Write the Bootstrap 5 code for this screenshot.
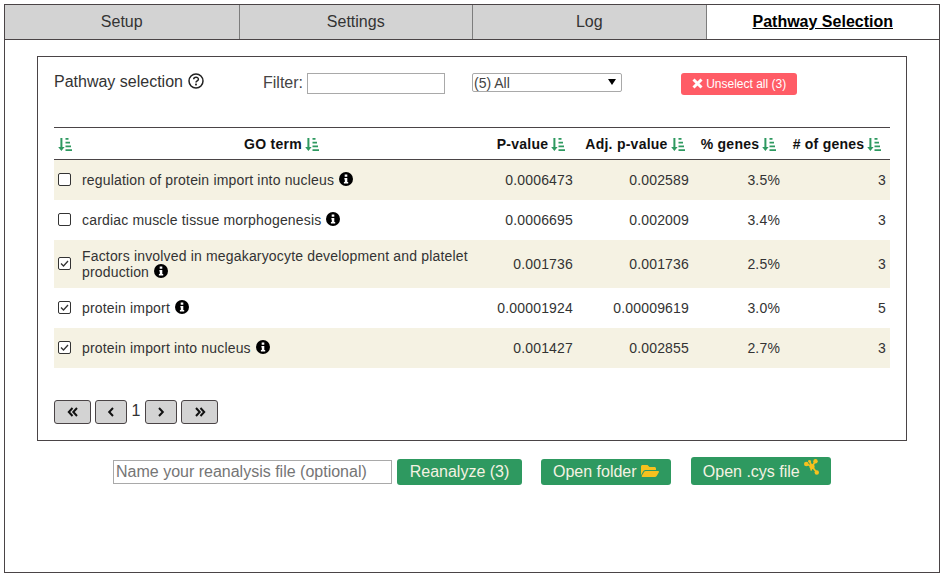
<!DOCTYPE html>
<html lang="en">
<head>
  <meta charset="UTF-8" />
  <meta name="viewport" content="width=device-width, initial-scale=1" />
  <title>Pathway Selection</title>
  <link href="https://cdn.jsdelivr.net/npm/bootstrap@5.3.2/dist/css/bootstrap.min.css" rel="stylesheet" />
  <style>
    body {
      font-family: "Liberation Sans", Arial, sans-serif;
      color: #333;
      background: #fff;
      font-size: 14px;
    }
    .app-frame {
      margin: 4px 6px 0 4px;
      height: 569px;
      border: 1px solid #4a4446;
    }
    .tab-bar { border-bottom: 1px solid #4a4446; height: 35px; }
    .tab-bar .nav-link {
      height: 34px;
      padding: 7px 0 0;
      font-size: 16px;
      line-height: 20px;
      color: #333;
      background: #d3d3d3;
      border-left: 1px solid #7d7d7d;
      border-radius: 0;
    }
    .tab-bar .nav-item:first-child .nav-link { border-left: 0; }
    .tab-bar .nav-link.active-tab {
      background: #fff;
      color: #000;
      font-weight: 700;
      text-decoration: underline;
    }
    .select-box {
      margin: 16px 32px 0;
      height: 385px;
      padding: 16px 16px 0;
      border: 1px solid #4a4446;
    }
    .top-row { height: 54px; }
    .box-title { width: 209px; font-size: 16px; line-height: 18px; margin-top: 0; }
    .filter-label { font-size: 16px; line-height: 20px; margin-right: 4px; color: #444; }
    .filter-input {
      width: 138px; height: 21px;
      border: 1px solid #a9a9a9;
      padding: 0 3px;
      outline: 0;
    }
    .pick-select {
      width: 150px; height: 19px;
      margin-left: 27px;
      padding: 0 0 0 1px;
      font-size: 14px; line-height: 16px;
      color: #444;
      border: 1px solid #a9a9a9;
      border-radius: 2px;
      appearance: none;
      background: #fff url("data:image/svg+xml,%3Csvg xmlns='http://www.w3.org/2000/svg' width='8' height='6'%3E%3Cpath d='M0 0h8L4 6z'/%3E%3C/svg%3E") no-repeat right 5px top 5px;
    }
    .btn-unselect {
      margin-left: 59px;
      width: 116px; height: 22px;
      padding: 0;
      font-size: 12px;
      line-height: 20px;
      color: #fff;
      background: #ff5c66;
      border: 0;
      border-radius: 3px;
    }
    .x-ico { width: 11px; height: 11px; vertical-align: -1px; }
    .gene-table {
      table-layout: fixed;
      width: 836px;
      margin: 0;
    }
    .gene-table > :not(caption) > * > * {
      padding: 0 4px;
      border: 0;
      vertical-align: middle;
      font-size: 14px;
      line-height: 16px;
      color: #333;
      box-shadow: none;
    }
    .gene-table thead th {
      height: 32px;
      padding: 0;
      font-weight: 700;
      color: #111;
      letter-spacing: .25px;
      text-align: center;
      border-top: 1px solid #4a4446;
      border-bottom: 1px solid #4a4446;
    }
    .gene-table tbody tr { height: 40px; }
    .gene-table tbody tr.tall-row { height: 48px; }
    .gene-table tbody td { letter-spacing: .17px; }
    .gene-table tbody tr:nth-child(odd) > td { background-color: #f5f2e3; }
    .num-cell { text-align: right; }
    .c-check { width: 24px; }
    .c-term { width: 411px; }
    .c-p { width: 88px; }
    .c-adj { width: 116px; }
    .c-pct { width: 91px; }
    .c-count { width: 106px; }
    .pick-check.form-check-input {
      display: block;
      width: 13px; height: 13px;
      margin: 0;
      border: 1px solid #333;
      border-radius: 2px;
      background-color: #fff;
      box-shadow: none;
    }
    .pick-check.form-check-input:checked {
      background-color: #fff;
      border-color: #333;
      background-size: 11px 11px;
      background-image: url("data:image/svg+xml,%3Csvg xmlns='http://www.w3.org/2000/svg' viewBox='0 0 11 11'%3E%3Cpath d='M2 5.500l2.500 2.500L9 3' fill='none' stroke='%23333' stroke-width='1.300'/%3E%3C/svg%3E");
    }
    .sort-ico { width: 14px; height: 13px; color: #2e9960; vertical-align: -2px; margin-left: 3px; }
    .info-ico { width: 14px; height: 14px; vertical-align: -1px; margin-left: 1px; }
    .help-ico { width: 16px; height: 16px; vertical-align: -2px; margin-left: 1px; }
    .pager { margin-top: 32px; }
    .pager .btn {
      height: 24px;
      padding: 0;
      background: #d3d3d3;
      border: 1px solid #4a4446;
      border-radius: 3px;
      display: flex;
      align-items: center;
      justify-content: center;
    }
    .pg-wide { width: 37px; }
    .pg-narrow { width: 32px; }
    .pg-num { font-size: 16px; line-height: 22px; width: 10px; text-align: center; margin: 0 4px; }
    .chev { width: 12px; height: 10px; }
    .bottom-row { margin: 16px 0 0 108px; }
    .name-input {
      width: 279px; height: 24px;
      margin-top: 3px;
      border: 1px solid #a9a9a9;
      padding: 0 2px;
      font-size: 16px;
      outline: 0;
    }
    .name-input::placeholder { color: #757575; opacity: 1; }
    .btn-go {
      padding: 0;
      height: 26px;
      font-size: 16px;
      line-height: 24px;
      color: #f5f2e3;
      background: #2e9960;
      border: 0;
      border-radius: 3px;
    }
    .btn-reanalyze { width: 125px; margin: 2px 0 0 5px; }
    .btn-folder { width: 130px; margin: 2px 0 0 19px; }
    .btn-cys { width: 140px; height: 28px; margin: 0 0 0 20px; line-height: 28px; padding-top: 1px; }
    .folder-ico { width: 18px; height: 16px; vertical-align: -2px; color: #f7c11e; }
    .net-ico { width: 15px; height: 16px; vertical-align: 2px; }
  </style>
</head>
<body>
  <svg width="0" height="0" class="position-absolute">
    <symbol id="sort" viewBox="0 0 14 13">
      <path d="M2.400 0h2v9h2.200L3.400 13 .2 9h2.200zM7.500 0h3v1.800h-3zM7.500 3.700h4.500v1.800H7.500zM7.500 7.400h5.500v1.800H7.500zM7.500 11.200H14V13H7.500z" fill="currentColor"/>
    </symbol>
    <symbol id="info" viewBox="0 0 14 14">
      <circle cx="7" cy="7" r="7" fill="#000"/>
      <path d="M5.700 2.600h2.600v2.200H5.700zM5.400 6h2.900v4.100h.9v1.400H4.900v-1.400h.9V7.400h-.4z" fill="#fff"/>
    </symbol>
  </svg>

  <div class="app-frame">
    <ul class="nav nav-justified tab-bar">
      <li class="nav-item"><a class="nav-link" href="#">Setup</a></li>
      <li class="nav-item"><a class="nav-link" href="#">Settings</a></li>
      <li class="nav-item"><a class="nav-link" href="#">Log</a></li>
      <li class="nav-item"><a class="nav-link active-tab" href="#">Pathway Selection</a></li>
    </ul>

    <div class="select-box">
      <div class="d-flex align-items-start top-row">
        <div class="box-title">Pathway selection
          <svg class="help-ico" viewBox="0 0 16 16"><circle cx="8" cy="8" r="7" fill="none" stroke="#222" stroke-width="1.500"/><path d="M5.700 6.300C5.800 3.600 10.400 3.600 10.400 6.200 10.400 7.900 8 7.800 8 9.600" fill="none" stroke="#222" stroke-width="1.500"/><rect x="7.100" y="10.600" width="1.800" height="1.800" fill="#222"/></svg>
        </div>
        <label class="filter-label" for="filter">Filter:</label>
        <input id="filter" class="filter-input" type="text" />
        <select class="pick-select"><option>(5) All</option></select>
        <button class="btn btn-unselect" type="button">
          <svg class="x-ico" viewBox="0 0 11 11"><path d="M1.500 1.500l8 8M9.500 1.500l-8 8" stroke="currentColor" stroke-width="3"/></svg> Unselect all (3)
        </button>
      </div>

      <table class="table gene-table">
        <colgroup>
          <col class="c-check" /><col class="c-term" /><col class="c-p" /><col class="c-adj" /><col class="c-pct" /><col class="c-count" />
        </colgroup>
        <thead>
          <tr>
            <th class="text-start ps-1"><svg class="sort-ico ms-0"><use href="#sort"/></svg></th>
            <th class="pe-1">GO term<svg class="sort-ico"><use href="#sort"/></svg></th>
            <th class="pe-1">P-value<svg class="sort-ico"><use href="#sort"/></svg></th>
            <th>Adj. p-value<svg class="sort-ico"><use href="#sort"/></svg></th>
            <th>% genes<svg class="sort-ico"><use href="#sort"/></svg></th>
            <th># of genes<svg class="sort-ico"><use href="#sort"/></svg></th>
          </tr>
        </thead>
        <tbody>
          <tr>
            <td><input class="form-check-input pick-check" type="checkbox" /></td>
            <td>regulation of protein import into nucleus <svg class="info-ico"><use href="#info"/></svg></td>
            <td class="num-cell">0.0006473</td><td class="num-cell">0.002589</td><td class="num-cell">3.5%</td><td class="num-cell">3</td>
          </tr>
          <tr>
            <td><input class="form-check-input pick-check" type="checkbox" /></td>
            <td>cardiac muscle tissue morphogenesis <svg class="info-ico"><use href="#info"/></svg></td>
            <td class="num-cell">0.0006695</td><td class="num-cell">0.002009</td><td class="num-cell">3.4%</td><td class="num-cell">3</td>
          </tr>
          <tr class="tall-row">
            <td><input class="form-check-input pick-check" type="checkbox" checked /></td>
            <td>Factors involved in megakaryocyte development and platelet production <svg class="info-ico"><use href="#info"/></svg></td>
            <td class="num-cell">0.001736</td><td class="num-cell">0.001736</td><td class="num-cell">2.5%</td><td class="num-cell">3</td>
          </tr>
          <tr>
            <td><input class="form-check-input pick-check" type="checkbox" checked /></td>
            <td>protein import <svg class="info-ico"><use href="#info"/></svg></td>
            <td class="num-cell">0.00001924</td><td class="num-cell">0.00009619</td><td class="num-cell">3.0%</td><td class="num-cell">5</td>
          </tr>
          <tr>
            <td><input class="form-check-input pick-check" type="checkbox" checked /></td>
            <td>protein import into nucleus <svg class="info-ico"><use href="#info"/></svg></td>
            <td class="num-cell">0.001427</td><td class="num-cell">0.002855</td><td class="num-cell">2.7%</td><td class="num-cell">3</td>
          </tr>
        </tbody>
      </table>

      <div class="d-flex align-items-start pager">
        <button class="btn pg-wide" type="button"><svg class="chev" viewBox="0 0 12 10"><path d="M5.500 1L1.800 5l3.700 4M10 1L6.300 5l3.700 4" fill="none" stroke="#111" stroke-width="2"/></svg></button>
        <button class="btn pg-narrow ms-1" type="button"><svg class="chev" viewBox="0 0 12 10"><path d="M8 1L4.200 5 8 9" fill="none" stroke="#111" stroke-width="2"/></svg></button>
        <span class="pg-num">1</span>
        <button class="btn pg-narrow" type="button"><svg class="chev" viewBox="0 0 12 10"><path d="M4 1l3.800 4L4 9" fill="none" stroke="#111" stroke-width="2"/></svg></button>
        <button class="btn pg-wide ms-1" type="button"><svg class="chev" viewBox="0 0 12 10"><path d="M2 1l3.700 4L2 9M6.500 1l3.700 4-3.700 4" fill="none" stroke="#111" stroke-width="2"/></svg></button>
      </div>
    </div>

    <div class="d-flex align-items-start bottom-row">
      <input class="name-input" type="text" placeholder="Name your reanalysis file (optional)" />
      <button class="btn btn-go btn-reanalyze" type="button">Reanalyze (3)</button>
      <button class="btn btn-go btn-folder" type="button">Open folder
        <svg class="folder-ico" viewBox="0 0 576 512"><path fill="currentColor" d="M572.694 292.093L500.27 416.248A63.997 63.997 0 0 1 444.989 448H45.025c-18.523 0-30.064-20.093-20.731-36.093l72.424-124.155A64 64 0 0 1 152 256h399.964c18.523 0 30.064 20.093 20.73 36.093zM152 224h328v-48c0-26.51-21.49-48-48-48H272l-64-64H48C21.49 64 0 85.49 0 112v278.046l69.077-118.418C86.214 242.25 117.989 224 152 224z"/></svg>
      </button>
      <button class="btn btn-go btn-cys" type="button">Open .cys file
        <svg class="net-ico" viewBox="0 0 15 16"><path d="M2.500 5L8 7.500 11.500 2.300M8 7.500l4.800 6M8 7.500L5.500 2.500M8 7.500l-1 4" fill="none" stroke="#f7c11e" stroke-width="1.700"/><circle cx="11.500" cy="2.300" r="2.200" fill="#f7c11e"/><circle cx="2.300" cy="5" r="2.300" fill="#f7c11e"/><circle cx="8" cy="7.500" r="2.600" fill="#f7c11e"/><circle cx="12.800" cy="13.500" r="2.200" fill="#f7c11e"/><circle cx="5.500" cy="2.300" r="1.400" fill="#f7c11e"/></svg>
      </button>
    </div>
  </div>

  <script src="https://cdn.jsdelivr.net/npm/bootstrap@5.3.2/dist/js/bootstrap.bundle.min.js"></script>
</body>
</html>
